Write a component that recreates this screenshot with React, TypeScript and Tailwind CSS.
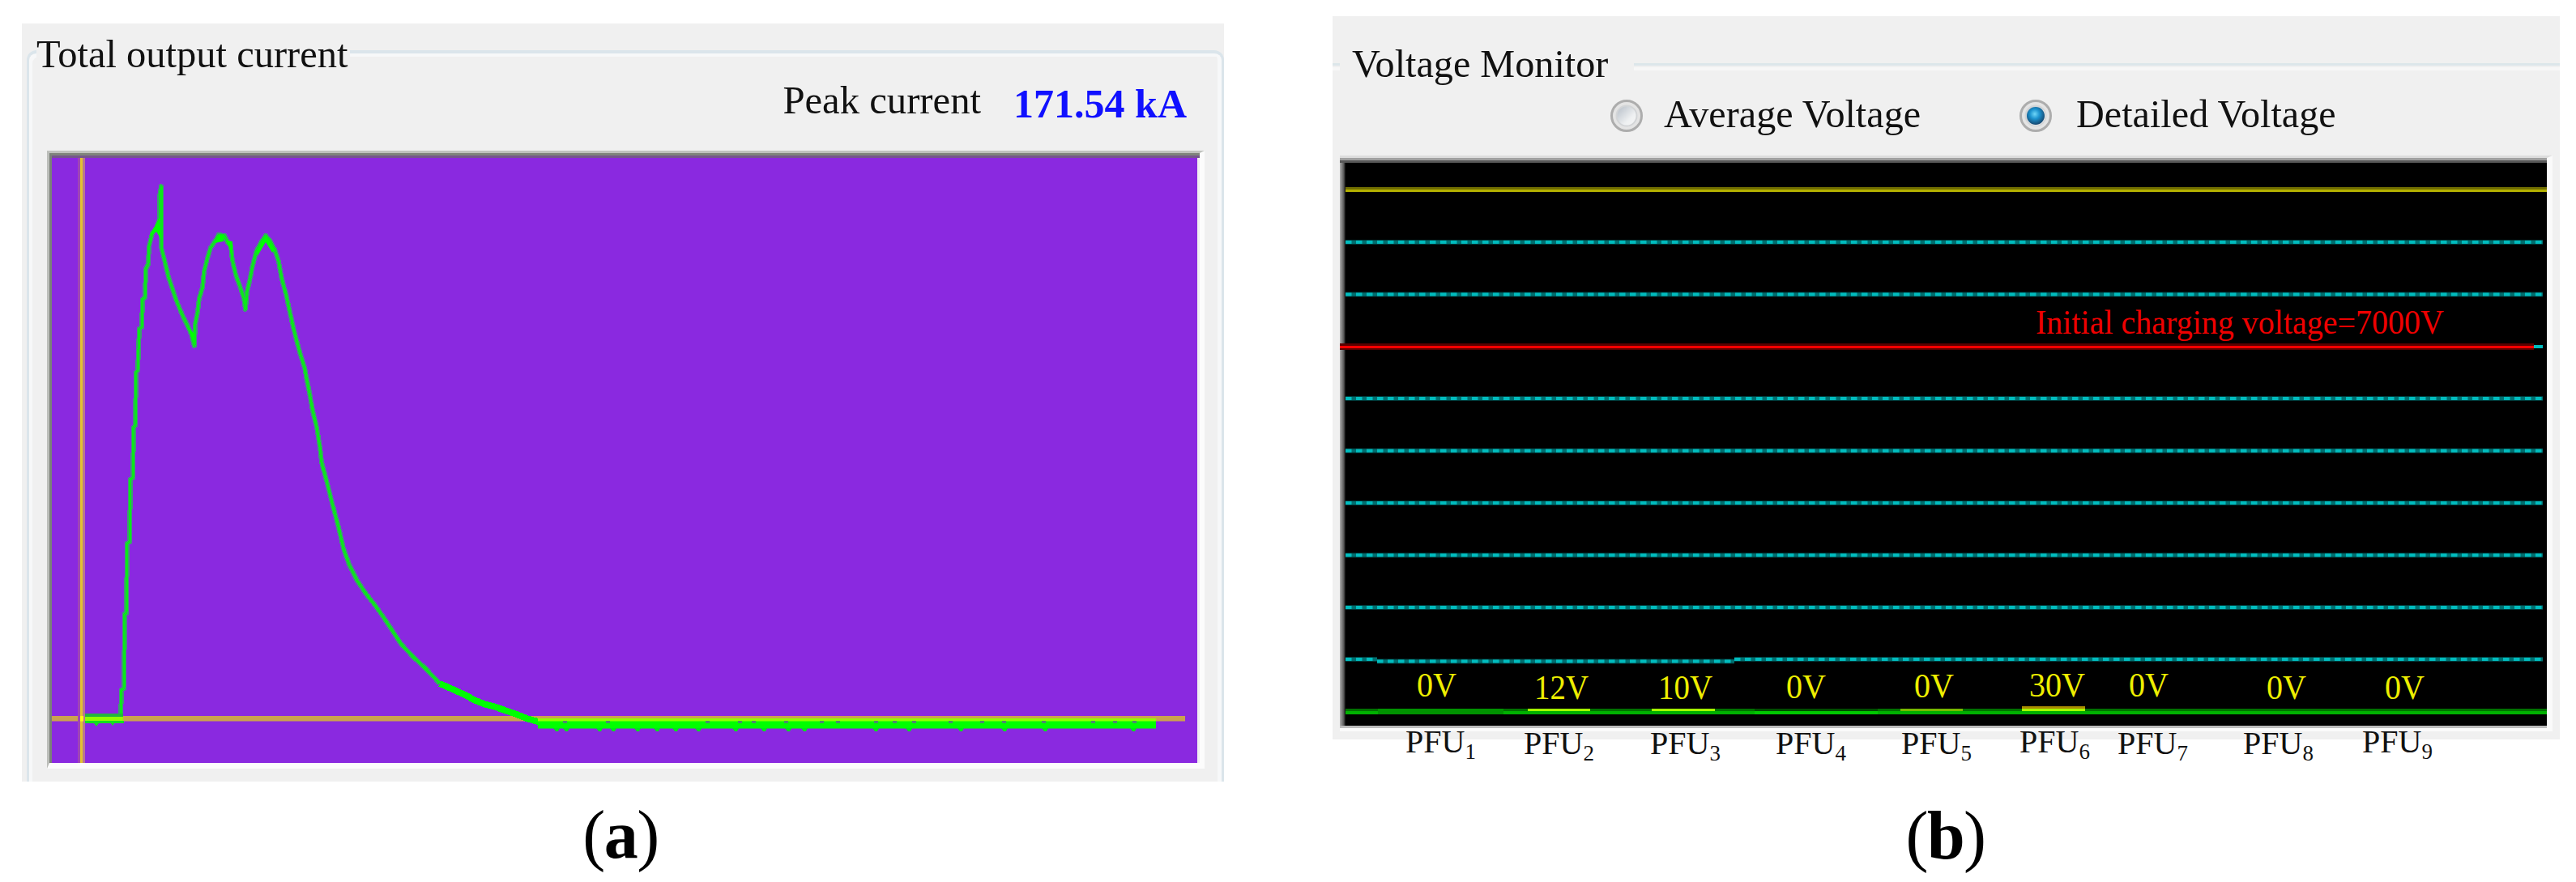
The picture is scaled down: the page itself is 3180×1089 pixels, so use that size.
import React from "react";

const CURVE: [number, number][] = [
  [149, 888], [150, 852], [153, 850], [154, 758], [156, 757], [157, 671], [160, 669], [161, 592],
  [164, 590], [165, 528], [167, 525], [168, 460], [170, 457], [172, 406], [175, 404], [176, 370], [179, 367],
  [180, 332], [183, 326], [184, 304], [188, 288], [193, 282], [197, 270], [197, 243], [199, 230], [199, 305],
  [204, 325], [208, 342], [213, 357], [217, 369], [221, 379], [226, 391], [231, 401], [236, 412], [240, 427],
  [241, 400], [244, 385], [246, 368], [250, 355], [252, 335], [256, 319], [260, 306], [266, 297], [270, 290],
  [277, 291], [281, 299], [285, 304], [287, 322], [291, 339], [296, 353], [301, 368], [303, 382], [305, 360],
  [309, 343], [312, 327], [317, 309], [323, 298], [328, 291], [333, 297], [339, 308], [344, 323], [348, 345],
  [353, 363], [358, 386], [362, 404], [366, 420], [371, 438], [376, 454], [379, 470], [383, 490], [386, 507],
  [391, 528], [395, 552], [397, 571], [403, 593], [407, 609], [411, 625], [418, 651], [424, 677], [431, 697],
  [441, 717], [451, 732], [462, 746], [472, 760], [482, 775], [495, 795], [510, 811], [525, 825], [543, 844],
];

const TAIL: [number, number][] = [
  [543, 844], [552, 848], [561, 852], [574, 858], [587, 865], [600, 870], [612, 873], [626, 878], [638, 882],
  [650, 887], [664, 891], [678, 893],
];

const NOTCHES = [
  687, 699, 740, 757, 787, 811, 834, 862, 908, 943, 973, 993, 1081, 1122, 1186, 1240, 1290, 1399,
];
const GAPS = [695, 748, 871, 911, 928, 968, 1012, 1032, 1079, 1102, 1126, 1171, 1210, 1237, 1286, 1347, 1374, 1398];

const pts = (list: [number, number][]) => list.map((p) => p.join(",")).join(" ");

function CurrentPlot() {
  return (
    <svg className="block" width="1414" height="747" viewBox="64 195 1414 747">
      <rect x="64" y="195" width="1414" height="747" fill="#8a29e0" />
      <rect x="64" y="884" width="1399" height="6.5" fill="#cba24f" />
      <g fill="none" strokeLinejoin="round" shapeRendering="crispEdges">
        <polyline points={pts(CURVE)} stroke="#3c9f70" strokeWidth="6" />
        <polyline points={pts(CURVE)} stroke="#0be81a" strokeWidth="3" />
        <polyline points={pts(TAIL)} stroke="#00ff00" strokeWidth="8" />
      </g>
      <path d="M184 292L193 276L197 268L199 296L193 286Z M265 300L270 290L277 291L276 298Z M279 297L287 298L287 316Z M317 310L328 291L339 308L336 312L328 299L318 316Z M232 405L240 412L240 424Z" fill="#00ff00" />
      <rect x="103" y="881" width="49" height="4" fill="#23b53f" />
      <rect x="103" y="885" width="49" height="6" fill="#90ff00" />
      <path d="M105 890h48v3h-12l-2 3l-2 -3h-15l-3 4l-3 -4h-11z" fill="#12e020" />
      <rect x="664" y="887" width="763" height="4" fill="#90ff00" />
      <rect x="664" y="890.5" width="763" height="9" fill="#00ff00" />
      {NOTCHES.map((x) => (
        <path key={x} d={`M${x - 4} 899h8l-2 4h-3z`} fill="#00e51a" />
      ))}
      {GAPS.map((x) => (
        <rect key={x} x={x} y="890" width="5" height="3" fill="#4a8a70" />
      ))}
      <rect x="96" y="195" width="3" height="747" fill="#a046b4" />
      <rect x="99" y="195" width="3" height="747" fill="#e3c230" />
      <rect x="102" y="195" width="3" height="747" fill="#b8788e" />
      <rect x="99" y="884" width="4" height="6.5" fill="#ffff10" />
    </svg>
  );
}

const GRID = [299, 363.5, 492, 556.5, 621, 685.5, 750];

function DottedLine({ x1, x2, y }: { x1: number; x2: number; y: number }) {
  return (
    <g>
      <line x1={x1} x2={x2} y1={y} y2={y} stroke="#003a3a" strokeWidth="6" />
      <line x1={x1} x2={x2} y1={y} y2={y} stroke="#006f70" strokeWidth="4" />
      <line x1={x1} x2={x2} y1={y} y2={y} stroke="#00bcbe" strokeWidth="4" strokeDasharray="7.5 5.5" />
    </g>
  );
}

const READINGS = [
  { x: 1749, y: 860, w: 49, t: "0V" },
  { x: 1894, y: 863, w: 67, t: "12V" },
  { x: 2047, y: 863, w: 67, t: "10V" },
  { x: 2205, y: 862, w: 49, t: "0V" },
  { x: 2363, y: 861, w: 49, t: "0V" },
  { x: 2505, y: 860, w: 69, t: "30V" },
  { x: 2628, y: 860, w: 49, t: "0V" },
  { x: 2798, y: 863, w: 49, t: "0V" },
  { x: 2944, y: 863, w: 49, t: "0V" },
];

function VoltagePlot() {
  return (
    <svg className="block" width="1490" height="695" viewBox="1654 201 1490 695">
      <rect x="1661" y="201" width="1483" height="695" fill="#000" />
      <rect x="1661" y="231" width="1483" height="3" fill="#706d00" />
      <rect x="1661" y="234" width="1483" height="3" fill="#b3b000" />
      {GRID.map((y) => (
        <DottedLine key={y} x1={1661} x2={3139} y={y} />
      ))}
      <DottedLine x1={1661} x2={1700} y={814} />
      <DottedLine x1={1700} x2={2141} y={816.5} />
      <DottedLine x1={2141} x2={3139} y={814} />
      <rect x="3128" y="426" width="11" height="4" fill="#00bcbe" />
      <rect x="1654" y="424" width="1474" height="8" fill="#5a0000" />
      <rect x="1654" y="427" width="1474" height="3" fill="#ff0000" />
      <rect x="1661" y="875" width="1483" height="3" fill="#007000" />
      <rect x="1661" y="878" width="1483" height="4" fill="#00b000" />
      <rect x="1701" y="875" width="155" height="7" fill="#009200" />
      <rect x="2166" y="875" width="152" height="3" fill="#004c00" />
      <rect x="2166" y="878" width="152" height="4" fill="#00c800" />
      <rect x="1886" y="875" width="77" height="3" fill="#a5ff00" />
      <rect x="2039" y="875" width="78" height="3" fill="#a5ff00" />
      <rect x="2346" y="875" width="77" height="3" fill="#78b800" />
      <rect x="2496" y="872" width="78" height="3" fill="#a88c00" />
      <rect x="2496" y="875" width="78" height="3" fill="#a5ff00" />
      <g className="font-['Liberation_Serif',serif]" fontSize="42">
        {READINGS.map((r) => (
          <text key={r.x} x={r.x} y={r.y} textLength={r.w} lengthAdjust="spacingAndGlyphs" fill="#eeee00">
            {r.t}
          </text>
        ))}
        <text x="2513" y="411.5" textLength="504" lengthAdjust="spacingAndGlyphs" fill="#ee0000">
          Initial charging voltage=7000V
        </text>
      </g>
    </svg>
  );
}

function Radio({ on }: { on?: boolean }) {
  return (
    <svg className="block size-[42px] shrink-0" viewBox="0 0 42 42">
      <defs>
        <linearGradient id="well" x1="0" y1="0" x2="1" y2="1">
          <stop offset="0" stopColor="#b3bbc5" />
          <stop offset="0.65" stopColor="#eef0f1" />
          <stop offset="1" stopColor="#f7f7f7" />
        </linearGradient>
        <radialGradient id="dot" cx="0.45" cy="0.4" r="0.6">
          <stop offset="0" stopColor="#6fd6f8" />
          <stop offset="0.45" stopColor="#1d93cf" />
          <stop offset="1" stopColor="#16466e" />
        </radialGradient>
      </defs>
      <circle cx="21" cy="21" r="18.5" fill="#e4e4e4" stroke="#adadad" strokeWidth="3" />
      <circle cx="21" cy="21" r="12.5" fill="url(#well)" stroke="#d3d5d7" strokeWidth="2" />
      {on && <circle cx="21" cy="21" r="11" fill="url(#dot)" />}
    </svg>
  );
}

function Caption({ letter }: { letter: string }) {
  return (
    <p className="text-[84px] leading-none tracking-[-1.5px] text-black whitespace-nowrap">
      (<b>{letter}</b>)
    </p>
  );
}

/** Column width is the distance to the following unit's label. */
const UNITS = [
  { n: 1, cell: "w-[146px]" },
  { n: 2, cell: "w-[156px] pt-[2px]" },
  { n: 3, cell: "w-[155px] pt-[2px]" },
  { n: 4, cell: "w-[155px] pt-[2px]" },
  { n: 5, cell: "w-[146px] pt-[2px]" },
  { n: 6, cell: "w-[121px]" },
  { n: 7, cell: "w-[155px] pt-[2px]" },
  { n: 8, cell: "w-[147px] pt-[2px]" },
  { n: 9, cell: "w-[100px]" },
];

export default function App() {
  return (
    <main className="flex h-[1089px] w-[3180px] items-start overflow-hidden bg-white pl-[27px] font-['Liberation_Serif',serif] text-[#111]">
      <figure className="flex w-[1484px] flex-col items-center pt-[29px]">
        <section className="h-[936px] w-full bg-[#f0f0f0] pt-[33px] pl-[6px]">
          <div className="h-[903px] rounded-t-[12px] border-x-[3px] border-t-[4px] border-[#dbe5eb] shadow-[inset_4px_4px_0_#f7f8f9,inset_-5px_0_0_#f7f8f9]">
            <h2 className="-mt-[23px] ml-[9px] w-[387px] bg-[#f0f0f0] text-[48.5px] leading-[48px] whitespace-nowrap">
              Total output current
            </h2>
            <div className="flex h-[95px] items-start justify-end pt-[9px] pr-[43px] leading-none whitespace-nowrap">
              <span className="mr-[40px] text-[48.7px]">Peak current</span>
              <span className="pt-[3px] text-[50px] font-bold text-[#1010ff]">171.54 kA</span>
            </div>
            <div className="ml-[22px] w-[1429px] border-t-[3px] border-l-[3px] border-r-[6px] border-b-[7px] border-t-[#c0c2be] border-r-[#fcfcfc] border-b-[#fcfcfc] border-l-[#bcbeba]">
              <div className="h-[753px] border-t-[3px] border-l-[3px] border-t-[#80847c] border-l-[#7b8078]">
                <div className="h-[750px] overflow-hidden border-t-[3px] border-t-[#75568c]">
                  <CurrentPlot />
                </div>
              </div>
            </div>
          </div>
        </section>
        <figcaption className="pt-[24px] pr-[6px]">
          <Caption letter="a" />
        </figcaption>
      </figure>

      <figure className="ml-[134px] flex w-[1515px] flex-col items-center pt-[20px]">
        <section className="h-[893px] w-full bg-[#f0f0f0] pt-[35px]">
          <header className="flex h-[49px] items-start leading-none whitespace-nowrap">
            <i className="mt-[23px] h-[9px] w-[9px] border-t-[3px] border-b-[4px] border-t-[#dce6ea] border-b-[#f7f7f7]" />
            <h2 className="w-[363px] pl-[15px] text-[48.2px]">Voltage Monitor</h2>
            <i className="mt-[23px] h-[9px] flex-1 border-t-[3px] border-b-[4px] border-t-[#dce6ea] border-b-[#f7f7f7]" />
          </header>
          <div className="flex h-[88px] items-start pt-[13px] pl-[342px] text-[48.2px] leading-none whitespace-nowrap">
            <label className="flex w-[505px] gap-[25px]">
              <span className="pt-[5px]"><Radio /></span>
              Average Voltage
            </label>
            <label className="flex gap-[29px]">
              <span className="pt-[5px]"><Radio on /></span>
              Detailed Voltage
            </label>
          </div>
          <div className="ml-[9px] flex w-[1497px] border-t-[3px] border-r-[7px] border-b-[4px] border-t-[#dddddd] border-r-[#fafafa] border-b-[#fafafa]">
            <div className="border-t-[3px] border-b-[3px] border-t-[#a0a0a0] border-b-[#bcbcbc]">
              <div className="border-t-[3px] border-t-[#585858] bg-linear-to-r from-[#b0b0b0] from-0% via-[#555] via-[5px] to-black to-[8px]">
                <VoltagePlot />
              </div>
            </div>
          </div>
          <div className="-mt-[7px] flex items-start pl-[90px] text-[40px] leading-none">
            {UNITS.map((u) => (
              <span key={u.n} className={u.cell}>
                PFU<span className="relative top-[8px] text-[27px] leading-none">{u.n}</span>
              </span>
            ))}
          </div>
        </section>
        <figcaption className="pt-[77px] pr-[2px]">
          <Caption letter="b" />
        </figcaption>
      </figure>
    </main>
  );
}
